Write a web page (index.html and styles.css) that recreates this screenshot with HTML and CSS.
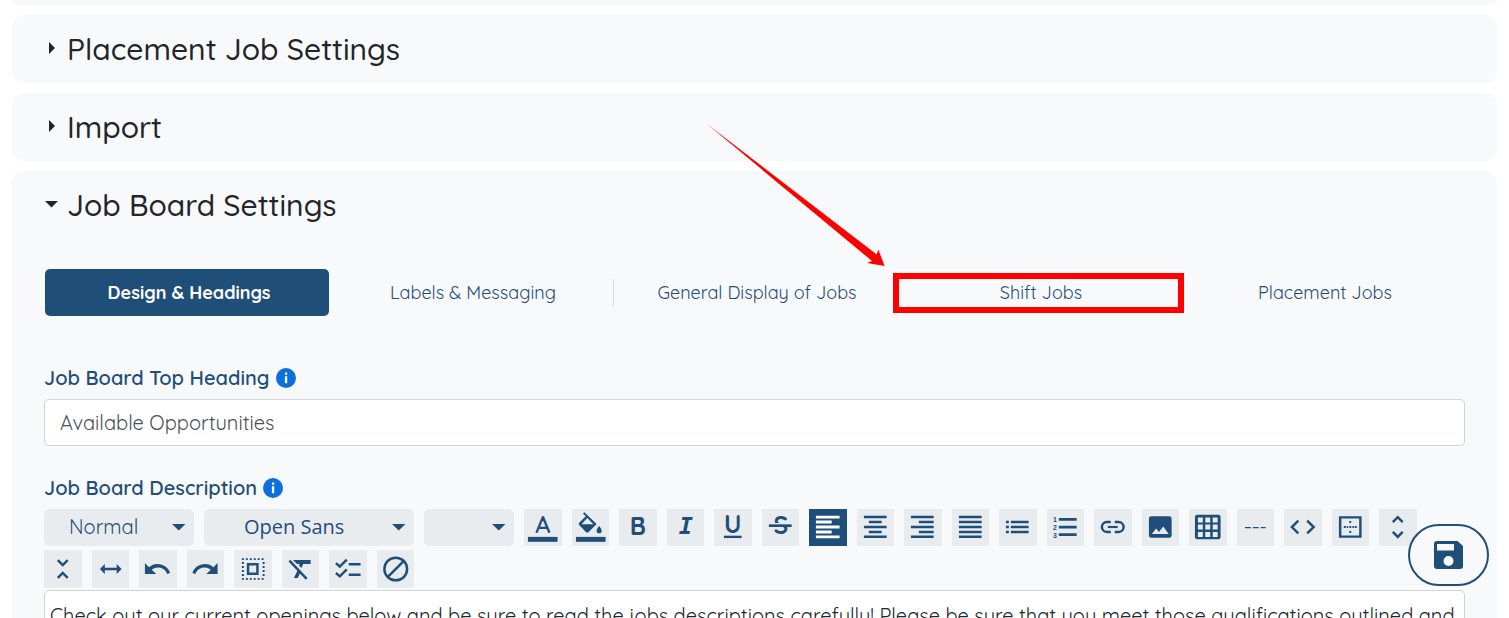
FILE: index.html
```html
<!DOCTYPE html>
<html lang="en">
<head>
<meta charset="utf-8">
<title>Job Board Settings</title>
<link rel="stylesheet" href="styles.css">
</head>
<body>
<svg class="defs" aria-hidden="true">
  <symbol id="info" viewBox="0 0 20 20"><circle cx="10" cy="10" r="10" fill="#0d6fdc"/><path d="M9 4.500h2.200v2.200H9zM8.900 8.300h2.300v6.900H8.900z" fill="#fff"/></symbol>
  <symbol id="caret" viewBox="0 0 14 8"><path d="M0 1h13.500L6.750 7.500z"/></symbol>
</svg>
<main class="page">
  <div class="panel panel-end"></div>
  <details class="panel">
    <summary class="panel-title"><svg class="marker" viewBox="0 0 14 14"><path d="M5 1l6 6-6 6z"/></svg><h2>Placement Job Settings</h2></summary>
  </details>
  <details class="panel">
    <summary class="panel-title"><svg class="marker" viewBox="0 0 14 14"><path d="M5 1l6 6-6 6z"/></svg><h2>Import</h2></summary>
  </details>
  <details class="panel panel-open" open>
    <summary class="panel-title"><svg class="marker" viewBox="0 0 14 14"><path d="M1 4h13L7.500 10.500z"/></svg><h2>Job Board Settings</h2></summary>
    <nav class="tabs">
      <a class="tab active" href="#design">Design &amp; Headings</a>
      <a class="tab" href="#labels">Labels &amp; Messaging</a>
      <a class="tab divided" href="#general">General Display of Jobs</a>
      <a class="tab divided" href="#shift">Shift Jobs
        <span class="highlight"></span>
        <svg class="arrow" viewBox="0 0 178 142"><path d="M0 0L169.700 130.500 171.300 125.500 177.600 142 160 139 165 137z" fill="#f00"/></svg>
      </a>
      <a class="tab divided" href="#placement">Placement Jobs</a>
    </nav>
    <div class="field">
      <div class="label-row"><label for="heading">Job Board Top Heading</label><svg class="info"><use href="#info"/></svg></div>
      <input class="text-input" id="heading" type="text" value="Available Opportunities">
    </div>
    <div class="field">
      <div class="label-row"><label id="desc-label">Job Board Description</label><svg class="info"><use href="#info"/></svg></div>
      <div class="toolbar" role="toolbar" aria-label="Formatting">
        <div class="tool-row">
          <span class="picker style-picker"><select aria-label="Paragraph style"><option>Normal</option></select><svg class="caret"><use href="#caret"/></svg></span>
          <span class="picker font-picker"><select aria-label="Font"><option>Open Sans</option></select><svg class="caret"><use href="#caret"/></svg></span>
          <span class="picker size-picker"><select aria-label="Font size"><option></option></select><svg class="caret"><use href="#caret"/></svg></span>
          <div class="tools tools-main">
            <button type="button" aria-label="Text color"><svg viewBox="0 0 38 37"><text class="glyph-a" x="19" y="24">A</text><path d="M4 28h30v5H4z"/></svg></button>
            <button type="button" aria-label="Background color"><svg viewBox="0 0 38 37"><path d="M4 28h30v5H4z"/><path fill-rule="evenodd" d="M12.500 3l-1.400 1.400 2.800 2.800-6.600 6.600c-.6.6-.6 1.600 0 2.200l7 7.200c.6.6 1.800.6 2.400 0l8.200-8.200zM15.500 9l6.200 6.200H9.600z"/><path d="M27.500 17s-2.600 2.900-2.600 4.700a2.600 2.600 0 0 0 5.200 0c0-1.800-2.600-4.700-2.600-4.700z"/></svg></button>
            <button type="button" aria-label="Bold"><svg viewBox="0 0 38 37"><text class="glyph-b" x="19" y="26">B</text></svg></button>
            <button type="button" aria-label="Italic"><svg viewBox="0 0 38 37"><text class="glyph-i" x="19" y="25.500">I</text></svg></button>
            <button type="button" aria-label="Underline"><svg viewBox="0 0 38 37"><text class="glyph-u" x="19" y="24">U</text><path d="M10 26.800h18v2.400H10z"/></svg></button>
            <button type="button" aria-label="Strikethrough"><svg viewBox="0 0 38 37"><text class="glyph-s" x="19" y="25.500">S</text><path class="gap" d="M8 14h22v2H8z"/><path d="M7 15.300h23v2.700H7z"/></svg></button>
            <button type="button" class="on" aria-label="Align left" aria-pressed="true"><svg viewBox="0 0 38 37"><path d="M7 6.500h24v3H7zM7 11.500h16v3H7zM7 16.500h24v3H7zM7 21.500h16v3H7zM7 26.500h24v3H7z"/></svg></button>
            <button type="button" aria-label="Align center"><svg viewBox="0 0 38 37"><path d="M7 6.700h23v2.500H7zM12 11.700h13v2.500H12zM7 16.700h23v2.500H7zM12 21.700h13v2.500H12zM7 26.700h23v2.500H7z"/></svg></button>
            <button type="button" aria-label="Align right"><svg viewBox="0 0 38 37"><path d="M7 6.700h23v2.500H7zM15 11.700h15v2.500H15zM7 16.700h23v2.500H7zM15 21.700h15v2.500H15zM7 26.700h23v2.500H7z"/></svg></button>
            <button type="button" aria-label="Justify"><svg viewBox="0 0 38 37"><path d="M7 6.700h23v2.500H7zM7 11.700h23v2.500H7zM7 16.700h23v2.500H7zM7 21.700h23v2.500H7zM7 26.700h23v2.500H7z"/></svg></button>
            <button type="button" aria-label="Bulleted list"><svg viewBox="0 0 38 37"><path d="M7 11.700h3v2.500H7zM12 11.700h18v2.500H12zM7 16.700h3v2.500H7zM12 16.700h18v2.500H12zM7 21.700h3v2.500H7zM12 21.700h18v2.500H12z"/></svg></button>
            <button type="button" aria-label="Numbered list"><svg viewBox="0 0 38 37"><path d="M12 9h18v2.700H12zM12 16.700h18v2.700H12zM12 24.400h18V27H12z"/><text class="num" x="8" y="13">1</text><text class="num" x="8" y="21">2</text><text class="num" x="8" y="29">3</text></svg></button>
            <button type="button" aria-label="Link"><svg viewBox="0 0 38 37"><path class="line" d="M17 13h-4a5 5 0 0 0 0 10h4M21 13h4a5 5 0 0 1 0 10h-4"/><path d="M14 16.900h10v2.200H14z"/></svg></button>
            <button type="button" aria-label="Image"><svg viewBox="0 0 38 37"><path fill-rule="evenodd" d="M9.500 7h18A2.500 2.500 0 0 1 30 9.500v17a2.500 2.500 0 0 1-2.500 2.500h-18A2.500 2.500 0 0 1 7 26.500v-17A2.500 2.500 0 0 1 9.500 7zM10 25h17l-5.500-7.500-4.300 5.500-3-3.500z"/></svg></button>
            <button type="button" aria-label="Table"><svg viewBox="0 0 38 37"><path fill-rule="evenodd" d="M8.500 5.500h21a2.500 2.500 0 0 1 2.500 2.500v20a2.500 2.500 0 0 1-2.500 2.500h-21A2.500 2.500 0 0 1 6 28V8a2.500 2.500 0 0 1 2.500-2.500zM9 8.500v5h5v-5zm7.500 0v5h5v-5zm7.500 0v5h5v-5zM9 15.500v5h5v-5zm7.500 0v5h5v-5zm7.500 0v5h5v-5zM9 23v5h5v-5zm7.500 0v5h5v-5zm7.500 0v5h5v-5z"/></svg></button>
            <button type="button" aria-label="Horizontal rule"><svg viewBox="0 0 38 37"><path d="M8 18h6v1.300H8zM16 18h6v1.300h-6zM24 18h5v1.300h-5z"/></svg></button>
            <button type="button" aria-label="Source code"><svg viewBox="0 0 38 37"><path class="line" d="M14.500 11.500L8 18l6.500 6.500M23.500 11.500L30 18l-6.500 6.500"/></svg></button>
            <button type="button" aria-label="Borders"><svg viewBox="0 0 38 37"><path fill-rule="evenodd" d="M7 7h23v22H7zM9.500 9.500v17h18v-17z"/><path d="M12 17h2v2h-2zM14.900 17h1.500v2h-1.500zM17.500 17h2v2h-2zM20.700 17h1.500v2h-1.500zM23 17h2v2h-2zM17.500 12h2v2h-2zM17.500 22h2v2h-2z"/></svg></button>
            <button type="button" aria-label="Expand height"><svg viewBox="0 0 38 37"><path class="line" d="M14 13l5-5 5 5M14 23l5 5 5-5"/></svg></button>
          </div>
        </div>
        <div class="tools tools-more">
          <button type="button" aria-label="Collapse height"><svg viewBox="0 0 38 38"><path class="line" d="M14 10l5 5 5-5M14 28l5-5 5 5"/></svg></button>
          <button type="button" aria-label="Full width"><svg viewBox="0 0 38 38"><path d="M8 19l5-5v3.800h12V14l5 5-5 5v-3.800H13V24z"/></svg></button>
          <button type="button" aria-label="Undo"><svg viewBox="0 0 38 38"><path d="M18.800 14c-3.400 0-6.400 1.200-8.700 3.300L6 13v11h11.500l-4.600-4.200A9.700 9.700 0 0 1 28.500 24l3-1C29.800 17.800 24.700 14 18.800 14z"/></svg></button>
          <button type="button" aria-label="Redo"><svg viewBox="0 0 38 38"><path d="M18.200 14c3.400 0 6.400 1.200 8.700 3.300L31 13v11H19.500l4.600-4.200A9.700 9.700 0 0 0 8.500 24l-3-1C7.200 17.800 12.300 14 18.200 14z"/></svg></button>
          <button type="button" aria-label="Select all"><svg viewBox="0 0 38 38"><path fill-rule="evenodd" d="M13 13h12v12H13zM15.500 15.500v7h7v-7z"/><path class="dots" d="M8 9h23M8 29h23M9 12v16M30 12v16"/></svg></button>
          <button type="button" aria-label="Clear formatting"><svg viewBox="0 0 38 38"><path d="M11 10h18v4h-7.500l-1.800 4-2.500-2.500.7-1.500h-2.600zM16.500 19l2.500 2.500L16 28h-4z"/><path class="line" d="M7.500 10.500L25 29"/></svg></button>
          <button type="button" aria-label="Checklist"><svg viewBox="0 0 38 38"><path class="line" d="M7 13l4 3.500 7-7M7 23l4 3.500 7-7"/><path d="M20 13h12v2.500H20zM20 23.500h12V26H20z"/></svg></button>
          <button type="button" aria-label="Disable"><svg viewBox="0 0 38 38"><circle class="line" cx="19" cy="19" r="11.500"/><path class="line" d="M11 27L27 11"/></svg></button>
        </div>
      </div>
      <div class="editor" contenteditable="true" role="textbox" aria-labelledby="desc-label">Check out our current openings below and be sure to read the jobs descriptions carefully! Please be sure that you meet those qualifications outlined and</div>
    </div>
  </details>
</main>
<button class="save" type="button" aria-label="Save"><svg viewBox="0 0 30 28"><path fill-rule="evenodd" d="M3 0h20.500L29 5v20a3 3 0 0 1-3 3H3a3 3 0 0 1-3-3V3a3 3 0 0 1 3-3zM3 3v6.500h17V3zM14.500 15a5 5 0 1 0 0 10 5 5 0 0 0 0-10z"/></svg></button>
</body>
</html>
```
FILE: styles.css
```css
* { box-sizing: border-box; }
html, body { height: 100%; }
body {
  margin: 0;
  overflow: hidden;
  background: #fff;
  color: #212529;
  font-family: Quicksand, "Open Sans", sans-serif;
  font-size: 20px;
  font-weight: 400;
}
.defs { display: none; }
.page { display: flex; flex-direction: column; gap: 10px; padding: 0 12px; }
.panel { padding: 10px 32px; background: #f8f9fb; border-radius: 12px; }
.panel-end { height: 5px; padding: 0; border-radius: 0 0 12px 12px; }
.panel-title { display: flex; align-items: center; gap: 9px; height: 48px; list-style: none; cursor: pointer; }
.panel-title h2 { margin: 0; font-size: 30px; line-height: 48px; font-weight: 500; }
.marker { width: 14px; height: 14px; margin-bottom: 2px; fill: #212529; }

.tabs { display: grid; grid-template-columns: repeat(5, 1fr); margin-top: 40px; padding-left: 1px; font-size: 18px; }
.tab { position: relative; height: 47px; padding-left: 4px; line-height: 47px; text-align: center; color: #1f4e79; text-decoration: none; }
.tab.active { background: #1f4e79; color: #fff; font-weight: 700; border-radius: 5px; }
.divided::before { content: ""; position: absolute; left: 0; top: 10px; bottom: 9px; width: 1px; background: #d9dde2; }
.highlight { position: absolute; z-index: 1; inset: 4px -3px 3px -4px; border: 6px solid #f00; }
.arrow { position: absolute; right: calc(100% + 12px); bottom: calc(100% + 3px); width: 178px; height: 142px; }

.field { margin-top: 30px; }
.tabs + .field { margin-top: 50px; }
.label-row { display: flex; align-items: center; gap: 6px; height: 26px; margin-bottom: 7px; color: #1f4e79; font-weight: 600; }
.label-row label { line-height: 24px; margin-bottom: 2px; }
.info { width: 20px; height: 20px; margin-bottom: 2px; }
.text-input {
  display: block; width: 100%; height: 47px; padding: 0 15px;
  border: 1px solid #ced4da; border-radius: 5px; background: #fff;
  color: #495057; font: inherit;
}

.toolbar { display: flex; flex-direction: column; gap: 4px; }
.tool-row { display: flex; gap: 10px; padding-right: 48px; }
.picker { position: relative; flex: none; display: flex; height: 37px; }
.style-picker { width: 150px; }
.font-picker { width: 210px; }
.size-picker { width: 90px; }
.picker select {
  appearance: none; width: 100%; padding: 0 25px 2px; border: 0; border-radius: 5px;
  background: #e9ecef; color: #1f4e79; font: inherit;
}
.font-picker select { padding: 0 40px 2px; font-family: "Open Sans", sans-serif; }
.caret { position: absolute; right: 8px; top: 14px; width: 14px; height: 8px; fill: #1f4e79; pointer-events: none; }
.tools { display: grid; gap: 10px; }
.tools-main { flex: 1; grid-template-columns: repeat(19, 1fr); }
.tools-more { width: 370px; grid-template-columns: repeat(8, 1fr); }
.tools button { display: flex; height: 37px; padding: 0; border: 0; background: #e9ecef; }
.tools-more button { height: 38px; }
.tools svg { width: 100%; height: 100%; fill: #1f4e79; }
.tools .on { background: #1f4e79; }
.tools .on svg { fill: #fff; }
.tools .line { fill: none; stroke: #1f4e79; stroke-width: 2.500; }
.tools .dots { fill: none; stroke: #1f4e79; stroke-width: 2; stroke-dasharray: 2 2; }
.tools .gap { fill: #e9ecef; }
.tools text { text-anchor: middle; font-family: Quicksand, "Open Sans", sans-serif; font-weight: 700; font-size: 25px; }
.tools .glyph-a { font-weight: 600; font-size: 24px; }
.tools .glyph-i { font-family: "DejaVu Sans Mono", monospace; font-style: italic; font-size: 24px; }
.tools .num { font-family: "Liberation Sans", sans-serif; font-size: 7px; }
.editor {
  min-height: 120px; margin-top: 2px; padding: 11px 5px;
  border: 1px solid #ced4da; border-radius: 5px; background: #fff;
  line-height: 28px;
}
.save {
  position: fixed; right: 20px; bottom: 32px; width: 81px; height: 62px;
  display: flex; align-items: center; justify-content: center;
  border: 2px solid #1f4e79; border-radius: 31px; background: #f8f9fb;
}
.save svg { width: 30px; height: 28px; fill: #1f4e79; }
```
